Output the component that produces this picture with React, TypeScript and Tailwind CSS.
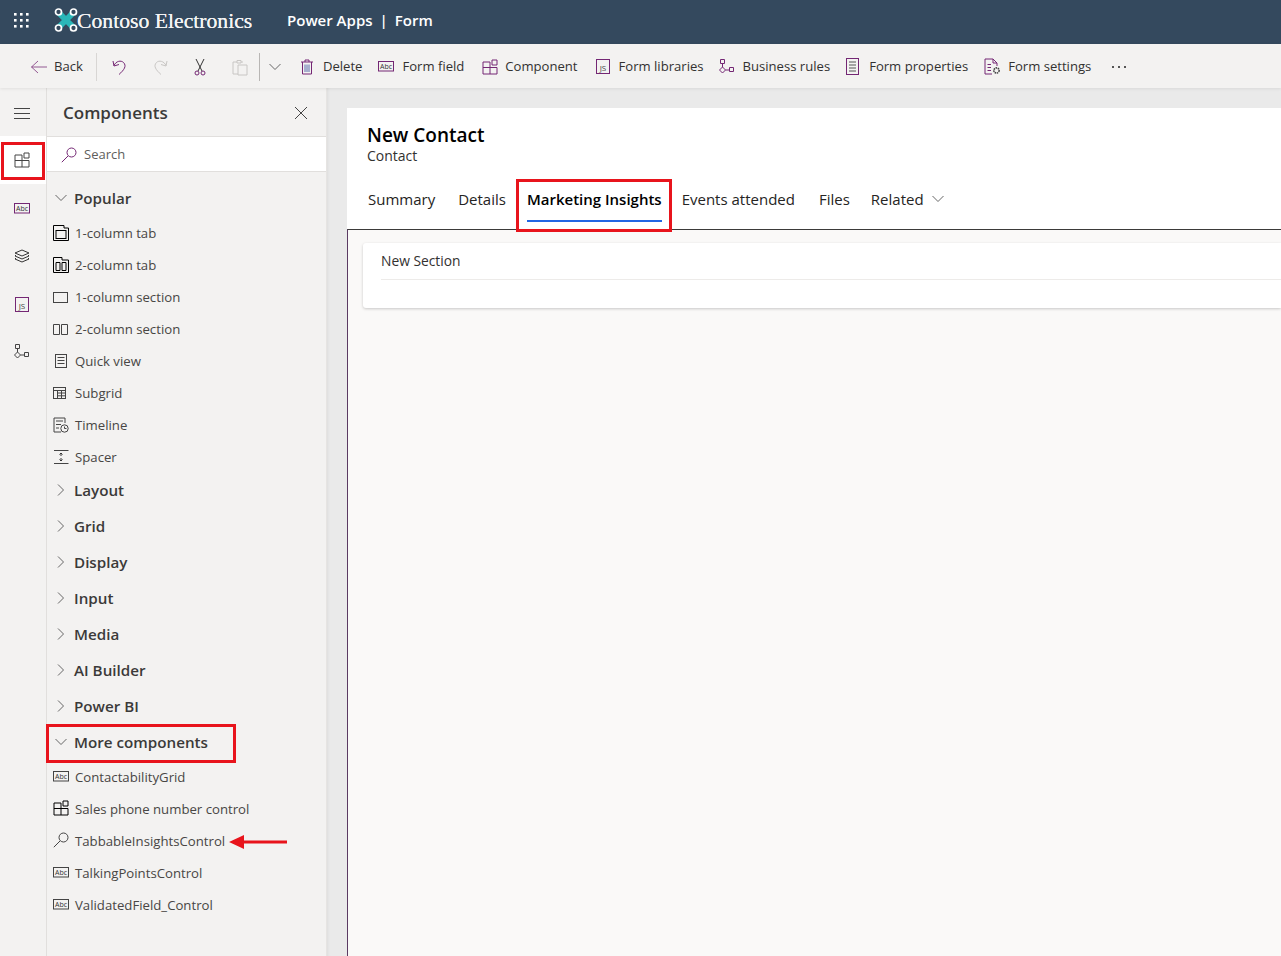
import React from "react";

const P = "#742774";
type IP = { c?: string; className?: string };
const S = ({ w = 16, h = 16, children, className = "" }: { w?: number; h?: number; children: React.ReactNode; className?: string }) => (
  <svg width={w} height={h} viewBox={`0 0 ${w} ${h}`} fill="none" strokeWidth={1} className={`shrink-0 ${className}`}>{children}</svg>
);
const Waffle = () => (
  <svg width="16" height="16" viewBox="0 0 16 16" fill="#fff" className="shrink-0">
    {[1, 7, 13].flatMap((y) => [1, 7, 13].map((x) => <rect key={`${x}-${y}`} x={x} y={y} width="2.6" height="2.6" />))}
  </svg>
);
const Logo = () => (
  <svg width="24" height="26" viewBox="0 0 24 26" fill="none" className="shrink-0">
    <path d="M5 6 L19 20 M19 6 L5 20" stroke="#2ab7b9" strokeWidth="6" />
    <circle cx="4.5" cy="5" r="3" stroke="#fff" strokeWidth="1.7" fill="#34495e" />
    <circle cx="19.5" cy="5" r="3" stroke="#fff" strokeWidth="1.7" fill="#34495e" />
    <circle cx="4.5" cy="21" r="3" stroke="#fff" strokeWidth="1.7" fill="#34495e" />
    <circle cx="19.5" cy="21" r="3" stroke="#fff" strokeWidth="1.7" fill="#34495e" />
  </svg>
);
const Back = () => (
  <S w={18} h={16}><path d="M8 2 L1.5 8 L8 14 M1.5 8 H17" stroke={P} strokeOpacity=".75" /></S>
);
const Undo = ({ c = P }: IP) => (
  <S w={16} h={18}><path d="M1 3 L2 8 L7 6.5 M2 7.5 C4 3 9 2 11.5 4.5 C15 8 12 12 7 16.5" stroke={c} /></S>
);
const Redo = () => (
  <S w={16} h={18}><path d="M15 3 L14 8 L9 6.5 M14 7.5 C12 3 7 2 4.5 4.5 C1 8 4 12 9 16.5" stroke="#c8c6c4" /></S>
);
const Cut = () => (
  <S w={12} h={18}><path d="M2 1 L8 13 M10 1 L4 13" stroke="#333" /><circle cx="3" cy="15" r="2" stroke={P} /><circle cx="9" cy="15" r="2" stroke={P} /></S>
);
const Paste = () => (
  <S w={16} h={17}><path d="M5 3 H1 V15 H6 M11 3 H9 M5 1.5 H9 V4 H5 Z M6 6 H15 V16 H6 Z" stroke="#c8c6c4" /></S>
);
const Chevron = ({ c = "#666", w = 12 }: IP & { w?: number }) => (
  <S w={w} h={8}><path d={`M0.5 1 L${w / 2} 6.5 L${w - 0.5} 1`} stroke={c} /></S>
);
const ChevronRight = () => (
  <S w={8} h={12}><path d="M1 0.5 L6.5 6 L1 11.5" stroke="#666" /></S>
);
const Trash = () => (
  <S w={14} h={16}><path d="M1 3 H13 M5 3 V1 H9 V3 M2.5 3 V15 H11.5 V3" stroke={P} /><path d="M5 5.5 V13 M7 5.5 V13 M9 5.5 V13" stroke="#5b6dab" /></S>
);
const Abc = ({ c = P }: IP) => (
  <svg width="16" height="11" viewBox="0 0 16 11" fill="none" className="shrink-0">
    <rect x=".5" y=".5" width="15" height="9.5" stroke={c} />
    <text x="8" y="8" textAnchor="middle" fontSize="7" fill="#333" fontFamily="'Open Sans', sans-serif">Abc</text>
  </svg>
);
const Comp = ({ c = P }: IP) => (
  <S><path d="M1 3 H8 V15 H1 Z M1 8.5 H15 V15 H8 M10 1 H15 V6 H10 Z" stroke={c} /></S>
);
const Js = ({ c = "#555" }: IP) => (
  <svg width="14" height="15" viewBox="0 0 14 15" fill="none" className="shrink-0">
    <rect x=".5" y=".5" width="13" height="14" stroke={c} />
    <text x="7" y="12" textAnchor="middle" fontSize="8" fill="#444" fontFamily="'Open Sans', sans-serif">JS</text>
  </svg>
);
const Rules = ({ c = P }: IP) => (
  <S><path d="M1.5 .5 H5.5 V4.5 H1.5 Z M3.5 4.5 V8 M3.5 8 L6.5 11 L3.5 14 L.5 11 Z M6.5 11 H10 M10.5 8.5 H14.5 V12.5 H10.5 Z" stroke={c} /></S>
);
const Props = () => (
  <S w={13} h={17}><rect x=".5" y=".5" width="12" height="16" stroke={P} /><path d="M3 4 H10 M3 7 H10 M3 10 H10 M3 13 H10" stroke="#555" /></S>
);
const Settings = () => (
  <S w={17} h={17}><path d="M8 16 H1 V1 H9 L13 5 V8 M9 1 V5 H13 M3.5 6.5 H7 M3.5 9.5 H7 M3.5 12.5 H7" stroke={P} /><circle cx="12.5" cy="12.5" r="2.6" stroke="#444" strokeWidth="1.6" strokeDasharray="1.5 .7" /></S>
);
const Lines = () => (
  <S w={16} h={11}><path d="M0 .5 H16 M0 5.5 H16 M0 10.5 H16" stroke="#444" /></S>
);
const Close = () => (
  <S w={14} h={14}><path d="M1 1 L13 13 M13 1 L1 13" stroke="#444" /></S>
);
const Search = ({ c = P }: IP) => (
  <S><circle cx="10.5" cy="5.5" r="4.5" stroke={c} /><path d="M7 9 L.8 15.2" stroke={c} /></S>
);
const Layers = () => (
  <S w={16} h={14}><path d="M8 1 L15 4 L8 7 L1 4 Z M2 6 L1 7 L8 10 L15 7 L14 6 M2 9 L1 10 L8 13 L15 10 L14 9" stroke="#333" /></S>
);
const Tab1 = () => (
  <S><path d="M.5 .5 H11 V3 H15.5 V15.5 H.5 Z" stroke="#000" /><rect x="3" y="5.5" width="10" height="8" stroke="#000" /></S>
);
const Tab2 = () => (
  <S><path d="M.5 .5 H9 V3 H15.5 V15.5 H.5 Z" stroke="#000" /><path d="M3 5.5 H7 V13.5 H3 Z M9 5.5 H13 V13.5 H9 Z" stroke="#000" /></S>
);
const Sec1 = () => (
  <S w={16} h={13}><rect x=".5" y="1.5" width="14" height="10" stroke="#444" /></S>
);
const Sec2 = () => (
  <S w={16} h={13}><path d="M.5 1.5 H6.5 V11.5 H.5 Z M8.5 1.5 H14.5 V11.5 H8.5 Z" stroke="#444" /></S>
);
const Quick = () => (
  <S w={14} h={15}><rect x=".5" y=".5" width="11" height="13" stroke="#444" /><path d="M2.5 3.5 H9.5 M2.5 6.5 H9.5 M2.5 9.5 H9.5" stroke="#444" /></S>
);
const Grid = () => (
  <S w={14} h={13}><rect x=".5" y=".5" width="12" height="11" stroke="#444" /><path d="M.5 3.5 H12.5 M4.5 3.5 V11.5 M4.5 6 H12.5 M4.5 8.8 H12.5 M8.5 3.5 V11.5" stroke="#444" /></S>
);
const Timeline = () => (
  <S><path d="M12 6 V1 H1 V15 H8 M3 4 H10 M3 7.5 H8 M3 11 H6" stroke="#444" /><circle cx="11.5" cy="11.5" r="3.7" stroke="#444" /><path d="M11.5 9.5 V11.5 H13.5" stroke="#444" /></S>
);
const Spacer = () => (
  <S w={16} h={14}><path d="M1 .5 H15.5 M1 13.5 H15.5" stroke="#444" /><path d="M8 3 V6 M6.5 4.5 L8 3 L9.5 4.5 M8 8 V11 M6.5 9.5 L8 11 L9.5 9.5" stroke="#333" /></S>
);

const Tool = ({ icon, label, gap = "gap-[8px]" }: { icon: React.ReactNode; label: string; gap?: string }) => (
  <div className={`flex items-center ${gap} text-[13.1px] text-[#323130] whitespace-nowrap`}>{icon}<span>{label}</span></div>
);
const Item = ({ icon, label, up = "-translate-y-px" }: { icon: React.ReactNode; label: string; up?: string }) => (
  <div className="h-8 flex items-center pl-[6px] text-[13.2px] text-[#484644] whitespace-nowrap">
    <span className={`w-[22px] flex justify-start shrink-0 ${up}`}>{icon}</span><span>{label}</span>
  </div>
);
const Group = ({ label, open }: { label: string; open?: boolean }) => (
  <div className="h-9 flex items-center text-[15.2px] font-semibold text-[#3b3a39] whitespace-nowrap">
    <span className="w-[27px] pl-2 flex items-center justify-start shrink-0">
      {open ? <Chevron /> : <span className="pl-[2px] flex"><ChevronRight /></span>}
    </span>
    {label}
  </div>
);
const RailBtn = ({ children, className = "" }: { children: React.ReactNode; className?: string }) => (
  <div className={`w-[46px] h-12 flex items-center justify-center pr-[2px] ${className}`}>{children}</div>
);

export default function App() {
  return (
    <div className="w-[1281px] h-[956px] overflow-hidden flex flex-col bg-[#eaeaea] relative" style={{ fontFamily: "'Open Sans', 'Noto Sans', sans-serif" }}>
      <header className="h-11 shrink-0 bg-[#34495e] flex items-center text-white pb-1">
        <div className="w-[54px] pl-[13px] shrink-0"><Waffle /></div>
        <Logo />
        <span className="text-[21.7px] w-[209px] shrink-0 -ml-px pt-[2px] text-[#f4f4f4] whitespace-nowrap [text-shadow:0_0_0.6px_#fff]" style={{ fontFamily: "'Liberation Serif', 'DejaVu Serif', serif" }}>Contoso Electronics</span>
        <span className="text-[15px] font-semibold whitespace-nowrap ml-px">Power Apps</span>
        <span className="text-[15px] font-semibold mx-[7px]">|</span>
        <span className="text-[15px] font-semibold">Form</span>
      </header>

      <div className="h-11 shrink-0 bg-[#f3f2f1] flex items-center pl-[30px] pt-[2px] shadow-[0_1px_3px_rgba(0,0,0,0.08)] relative z-10">
        <Tool icon={<Back />} label="Back" gap="gap-[6px]" />
        <div className="w-px h-7 bg-[#d8d6d4] ml-[13px] mr-[15px]" />
        <Undo />
        <div className="w-6" /><Redo />
        <div className="w-[26px]" /><Cut />
        <div className="w-[26px]" /><Paste />
        <div className="w-px h-7 bg-[#b8b6b4] ml-[11px] mr-[9px]" />
        <Chevron />
        <div className="w-[19px]" />
        <Tool icon={<Trash />} label="Delete" gap="gap-[9px]" />
        <div className="w-[16px]" />
        <Tool icon={<Abc />} label="Form field" />
        <div className="w-[18px]" />
        <Tool icon={<Comp />} label="Component" gap="gap-[7px]" />
        <div className="w-[18px]" />
        <Tool icon={<Js c={P} />} label="Form libraries" gap="gap-[9px]" />
        <div className="w-[15px]" />
        <Tool icon={<Rules />} label="Business rules" />
        <div className="w-[16px]" />
        <Tool icon={<Props />} label="Form properties" gap="gap-[10px]" />
        <div className="w-[16px]" />
        <Tool icon={<Settings />} label="Form settings" gap="gap-[7px]" />
        <div className="ml-[21px] flex gap-[4px]">
          <span className="w-[2px] h-[2px] bg-[#555]" /><span className="w-[2px] h-[2px] bg-[#555]" /><span className="w-[2px] h-[2px] bg-[#555]" />
        </div>
      </div>

      <div className="flex-1 flex min-h-0">
        <nav className="w-[47px] shrink-0 bg-[#f3f2f1] border-r border-[#e1dfdd] flex flex-col">
          <RailBtn className="pt-[2px]"><Lines /></RailBtn>
          <RailBtn className="bg-white"><Comp c="#444" /></RailBtn>
          <RailBtn><Abc /></RailBtn>
          <RailBtn><Layers /></RailBtn>
          <RailBtn><Js c={P} /></RailBtn>
          <RailBtn><Rules c="#444" /></RailBtn>
        </nav>

        <aside className="w-[280px] shrink-0 bg-[#f3f2f1] border-r border-[#e6e4e2] flex flex-col">
          <div className="h-12 shrink-0 flex items-center justify-between pl-4 pr-[18px] pt-[2px] text-[17px] font-semibold text-[#3b3a39]">
            <span>Components</span><Close />
          </div>
          <div className="h-[36px] shrink-0 bg-white border-y border-[#e1dfdd] flex items-center pl-[14px] pt-[2px] gap-[7px] text-[13px] text-[#605e5c]">
            <Search />Search
          </div>
          <div className="mt-2"><Group label="Popular" open /></div>
          <div className="pt-[2px] mb-[-2px]">
            <Item icon={<Tab1 />} label="1-column tab" />
            <Item icon={<Tab2 />} label="2-column tab" />
            <Item icon={<Sec1 />} label="1-column section" />
            <Item icon={<Sec2 />} label="2-column section" />
            <Item icon={<span className="pl-[2px] flex"><Quick /></span>} label="Quick view" />
            <Item icon={<Grid />} label="Subgrid" />
            <Item icon={<Timeline />} label="Timeline" />
            <Item icon={<Spacer />} label="Spacer" />
          </div>
          {["Layout", "Grid", "Display", "Input", "Media", "AI Builder", "Power BI"].map((g) => <Group key={g} label={g} />)}
          <Group label="More components" open />
          <div className="pt-[2px]">
            <Item up="-translate-y-[2px]" icon={<Abc c="#444" />} label="ContactabilityGrid" />
            <Item up="-translate-y-[2px]" icon={<Comp c="#000" />} label="Sales phone number control" />
            <Item up="-translate-y-[2px]" icon={<Search c="#444" />} label="TabbableInsightsControl" />
            <Item up="-translate-y-[2px]" icon={<Abc c="#444" />} label="TalkingPointsControl" />
            <Item up="-translate-y-[2px]" icon={<Abc c="#444" />} label="ValidatedField_Control" />
          </div>
        </aside>

        <main className="flex-1 min-w-0 pl-[20px] pt-[20px] shadow-[inset_3px_0_3px_-2px_rgba(0,0,0,0.06)]">
          <div className="h-full flex flex-col bg-white">
            <div className="h-[121px] shrink-0 px-5 pt-[14px]">
              <div className="text-[19px] leading-[27px] font-semibold text-black">New Contact</div>
              <div className="text-[14px] leading-[16px] text-[#323130] -mt-[1px]">Contact</div>
              <div className="flex items-start mt-[24px] ml-px text-[15px] leading-[22px] text-[#252423] whitespace-nowrap">
                <span className="mr-[23px]">Summary</span>
                <span className="mr-[21px]">Details</span>
                <span className="font-semibold text-black border-b-2 border-[#2266e3] h-[34px] mr-[20px]">Marketing Insights</span>
                <span className="mr-[24px]">Events attended</span>
                <span className="mr-[21px]">Files</span>
                <span className="flex items-center gap-[8px]">Related <Chevron /></span>
              </div>
            </div>
            <div className="flex-1 bg-[#faf9f8] border-t border-l border-[#5b3a63] border-t-[#3b3a39] pl-[15px] pt-[13px]">
              <div className="h-[65px] bg-white rounded-l-[3px] shadow-[0_1px_3px_rgba(0,0,0,0.2)] pl-[18px]">
                <div className="h-[37px] border-b border-[#edebe9] flex items-center text-[13.8px] font-medium text-[#323130]">New Section</div>
              </div>
            </div>
          </div>
        </main>
      </div>

      <div className="absolute left-[1px] top-[142px] w-[44px] h-[38px] border-[3px] border-[#e8141c]" />
      <div className="absolute left-[516px] top-[179px] w-[156px] h-[53px] border-[3px] border-[#e8141c]" />
      <div className="absolute left-[46px] top-[724px] w-[190px] h-[39px] border-[3px] border-[#e8141c]" />
      <svg className="absolute left-[229px] top-[834px]" width="60" height="16" viewBox="0 0 60 16">
        <path d="M0 8 L15 1 V6.5 H58 V9.5 H15 V15 Z" fill="#e8141c" />
      </svg>
    </div>
  );
}
